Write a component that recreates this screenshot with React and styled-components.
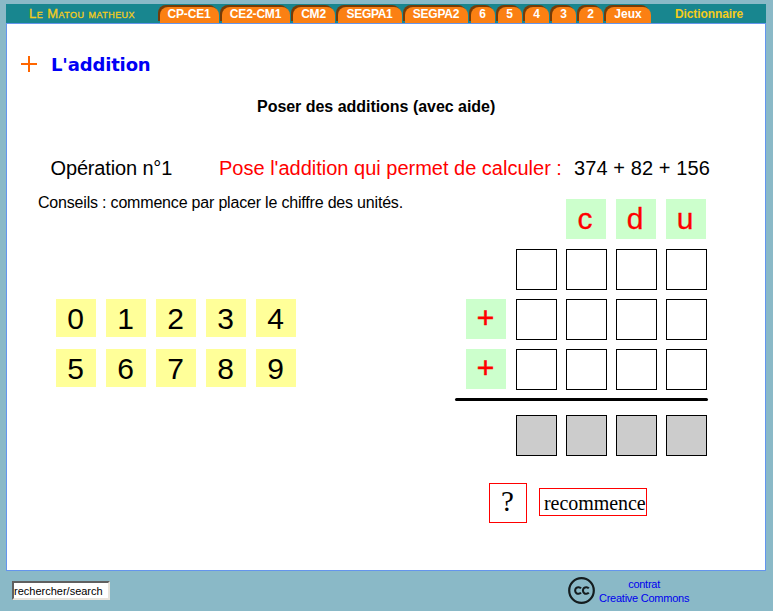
import React from "react";
import styled, { createGlobalStyle } from "styled-components";

const GlobalStyle = createGlobalStyle`
  *, *::before, *::after { box-sizing: border-box; }
  body {
    margin: 0;
    background: #8ab9c7;
    font-family: "Liberation Sans", Arial, sans-serif;
    color: #000;
  }
`;

const Page = styled.div`
  width: 773px;
  height: 611px;
  padding: 4px 7px 0 6px;
  display: flex;
  flex-direction: column;
  overflow: hidden;
  white-space: nowrap;
`;

const TopBar = styled.header`
  height: 19px;
  display: flex;
  align-items: flex-end;
  background: #18868f;
  font-size: 12px;
  font-weight: bold;
`;

const Brand = styled.a`
  width: 154px;
  height: 16px;
  padding-left: 23px;
  font-size: 13px;
  line-height: 14px;
  font-variant: small-caps;
  font-weight: normal;
  -webkit-text-stroke: 0.3px #f5cc1b;
  letter-spacing: 0.45px;
  color: #f5cc1b;
`;

const Tabs = styled.nav`
  display: flex;
  gap: 3px;
`;

const Tab = styled.a`
  width: ${(p) => p.$width}px;
  height: 16px;
  line-height: 14px;
  text-align: center;
  letter-spacing: ${(p) => p.$spacing || 0}px;
  padding-right: 1px;
  color: #fff;
  background: #fb8013;
  border-radius: 8px 8px 0 0;
  box-shadow: -2px -2px 0 #743b08;
`;

const DictionaryLink = styled.a`
  height: 16px;
  margin-left: 24px;
  line-height: 14px;
  letter-spacing: -0.1px;
  color: #f5cc1b;
`;

const Main = styled.main`
  height: 548px;
  background: #fff;
  border: 1px solid #6495ed;
  display: flex;
  flex-direction: column;
`;

const Heading = styled.h1`
  margin: 30px 0 0 14px;
  height: 22px;
  display: flex;
  align-items: center;
  gap: 14px;
  font: bold 18px/22px "DejaVu Sans", Verdana, sans-serif;
  letter-spacing: -0.15px;
  color: #0000f5;
`;

const HeadingIcon = styled.svg`
  width: 16px;
  height: 16px;
  margin-bottom: 2px;
`;

const Subtitle = styled.h2`
  margin: 21px 0 0 250px;
  font-size: 16px;
  line-height: 20px;
  letter-spacing: -0.03px;
`;

const Question = styled.div`
  margin: 39px 0 0 43.5px;
  display: flex;
  height: 24px;
  font-size: 20px;
  line-height: 24px;
`;

const OperationNumber = styled.span`
  width: 168.5px;
  letter-spacing: -0.15px;
`;

const Instruction = styled.span`
  width: 355px;
  color: #f00;
`;

const Sum = styled.span`
  letter-spacing: 0.1px;
`;

const Workspace = styled.div`
  display: flex;
  padding-left: 31px;
`;

const HelpColumn = styled.section`
  width: 417px;
  padding-top: 13px;
`;

const Advice = styled.p`
  margin: 0;
  font-size: 16px;
  line-height: 20px;
  letter-spacing: -0.19px;
`;

const Keypad = styled.div`
  margin: 86px 0 0 18px;
  display: grid;
  grid-template-columns: repeat(5, 40px);
  gap: 12px 10px;
`;

const DigitKey = styled.div`
  height: 38px;
  line-height: 40px;
  font-size: 30px;
  text-align: center;
  padding-right: 1px;
  background: #ff9;
`;

const Board = styled.section`
  width: 253px;
  padding-top: 19px;
`;

const BoardRow = styled.div`
  display: grid;
  grid-template-columns: repeat(5, 40px);
  column-gap: 10px;
  height: 50px;
  margin-left: 11px;
`;

const Label = styled.div`
  grid-column: ${(p) => p.$column};
  height: 40px;
  line-height: 39px;
  padding-right: 2px;
  font-size: 30px;
  text-align: center;
  color: #f00;
  background: #cfc;
  -webkit-text-stroke: 0.3px #f00;
`;

const Operator = styled(Label)`
  line-height: 37px;
  padding-right: 1px;
  -webkit-text-stroke: 0.6px #f00;
`;

const Cell = styled.div`
  grid-column: ${(p) => p.$column};
  width: 41px;
  height: 41px;
  border: 1px solid #000;
  background: ${(p) => (p.$result ? "#ccc" : "#fff")};
`;

const SumLine = styled.div`
  width: 253px;
  height: 3px;
  margin: -1px 0 14px;
  border-radius: 2px;
  background: #000;
`;

const Actions = styled.div`
  display: flex;
  gap: 12px;
  margin: 18px 0 0 34px;
  align-items: flex-start;
  font-family: "Liberation Serif", "Times New Roman", serif;
`;

const HelpButton = styled.div`
  width: 38px;
  height: 40px;
  border: 1px solid #f00;
  font-size: 29px;
  line-height: 34px;
  text-align: center;
  padding-right: 1px;
`;

const RestartButton = styled.div`
  width: 108px;
  height: 28px;
  margin-top: 5px;
  border: 1px solid #f00;
  padding-left: 4px;
  font-size: 20px;
  line-height: 28px;
  letter-spacing: -0.05px;
`;

const Footer = styled.footer`
  display: flex;
  align-items: flex-start;
`;

const SearchInput = styled.input`
  width: 98px;
  height: 19px;
  margin: 10px 458px 0 6px;
  padding: 1px 0 0;
  border: 2px solid;
  border-color: #606060 #e8e4dc #e8e4dc #606060;
  border-radius: 0;
  background: #fff;
  color: #000;
  font: 11px "Liberation Sans", Arial, sans-serif;
  outline: none;
`;

const LicenceIcon = styled.svg`
  width: 27px;
  height: 27px;
  margin-top: 6px;
`;

const LicenceLink = styled.a`
  margin: 6px 0 0 4px;
  font-size: 11px;
  line-height: 14px;
  letter-spacing: -0.25px;
  text-align: center;
  color: #00e;
`;

const TABS = [
  ["CP-CE1", 59, -0.2],
  ["CE2-CM1", 68, -0.2],
  ["CM2", 42, -0.2],
  ["SEGPA1", 64, -0.3],
  ["SEGPA2", 63, -0.2],
  ["6", 24],
  ["5", 24],
  ["4", 24],
  ["3", 24],
  ["2", 24],
  ["Jeux", 45],
];

const PlusIcon = () => (
  <HeadingIcon viewBox="0 0 16 16">
    <path d="M0 8h16M8 0v16" stroke="#f60" strokeWidth="2" fill="none" />
  </HeadingIcon>
);

const CreativeCommonsIcon = () => (
  <LicenceIcon viewBox="0 0 27 27" fill="none" stroke="#141c1e">
    <circle cx="13.5" cy="13.5" r="12.3" strokeWidth="2.2" />
    <path d="M13 11.4a3.3 3.3 0 1 0 0 4.2M20.8 11.4a3.3 3.3 0 1 0 0 4.2" strokeWidth="2.1" />
  </LicenceIcon>
);

const InputCells = ({ result }) =>
  [2, 3, 4, 5].map((column) => <Cell key={column} $column={column} $result={result} />);

export default function App() {
  return (
    <>
      <GlobalStyle />
      <Page>
        <TopBar>
          <Brand>Le Matou matheux</Brand>
          <Tabs>
            {TABS.map(([name, width, spacing]) => (
              <Tab key={name} $width={width} $spacing={spacing}>{name}</Tab>
            ))}
          </Tabs>
          <DictionaryLink>Dictionnaire</DictionaryLink>
        </TopBar>
        <Main>
          <Heading><PlusIcon />L'addition</Heading>
          <Subtitle>Poser des additions (avec aide)</Subtitle>
          <Question>
            <OperationNumber>Opération n°1</OperationNumber>
            <Instruction>Pose l'addition qui permet de calculer :</Instruction>
            <Sum>374 + 82 + 156</Sum>
          </Question>
          <Workspace>
            <HelpColumn>
              <Advice>Conseils : commence par placer le chiffre des unités.</Advice>
              <Keypad>
                {[..."0123456789"].map((digit) => <DigitKey key={digit}>{digit}</DigitKey>)}
              </Keypad>
            </HelpColumn>
            <Board>
              <BoardRow>
                <Label $column={3}>c</Label>
                <Label $column={4}>d</Label>
                <Label $column={5}>u</Label>
              </BoardRow>
              <BoardRow><InputCells /></BoardRow>
              <BoardRow><Operator $column={1}>+</Operator><InputCells /></BoardRow>
              <BoardRow><Operator $column={1}>+</Operator><InputCells /></BoardRow>
              <SumLine />
              <BoardRow><InputCells result /></BoardRow>
              <Actions>
                <HelpButton>?</HelpButton>
                <RestartButton>recommence</RestartButton>
              </Actions>
            </Board>
          </Workspace>
        </Main>
        <Footer>
          <SearchInput defaultValue="rechercher/search" />
          <CreativeCommonsIcon />
          <LicenceLink>contrat<br />Creative Commons</LicenceLink>
        </Footer>
      </Page>
    </>
  );
}
